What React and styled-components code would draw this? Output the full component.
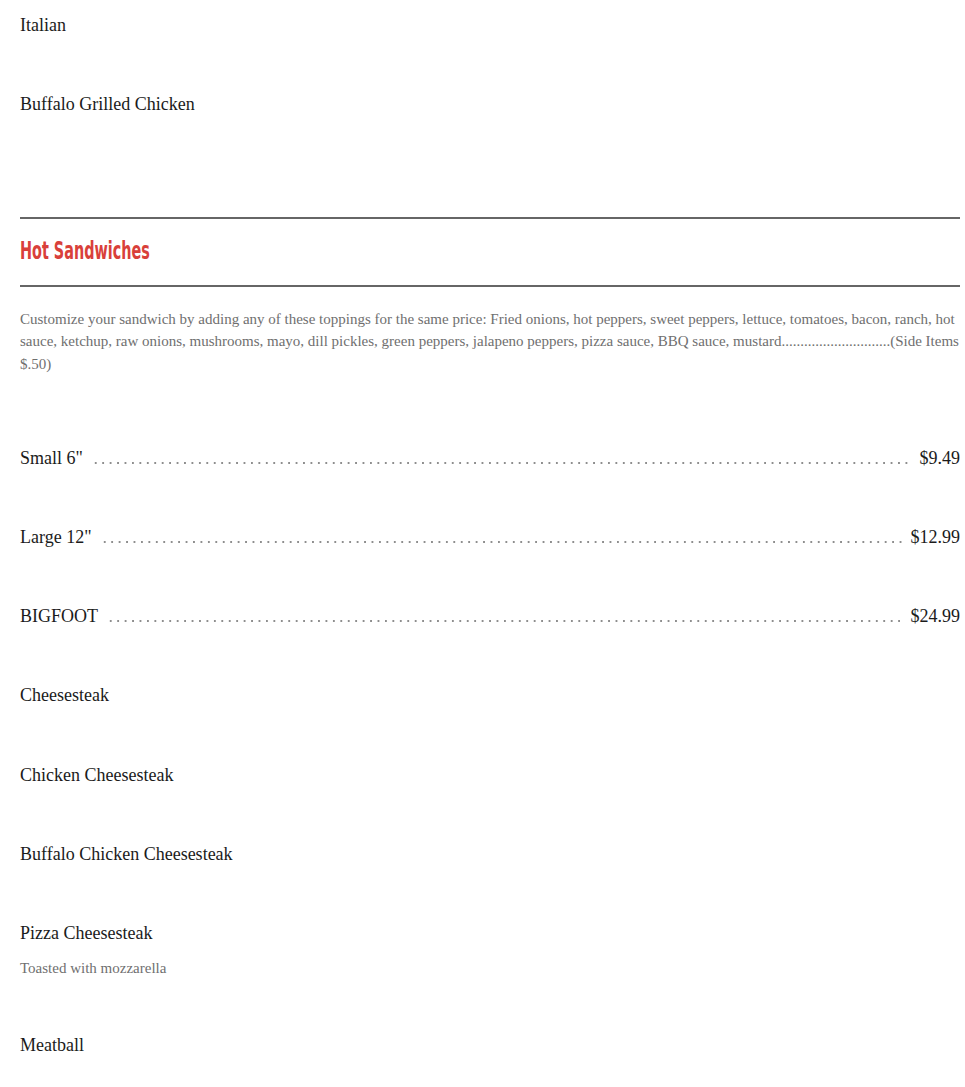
import styled, { createGlobalStyle } from "styled-components";

const GlobalStyle = createGlobalStyle`
  body {
    margin: 0;
    background: #fff;
    font-family: "Liberation Serif", "Times New Roman", serif;
    color: #1b1b1b;
  }
`;

const beforeItems = [{ name: "Italian" }, { name: "Buffalo Grilled Chicken" }];

const hotItems = [
  { name: 'Small 6"', price: "$9.49" },
  { name: 'Large 12"', price: "$12.99" },
  { name: "BIGFOOT", price: "$24.99" },
  { name: "Cheesesteak" },
  { name: "Chicken Cheesesteak" },
  { name: "Buffalo Chicken Cheesesteak" },
  { name: "Pizza Cheesesteak", note: "Toasted with mozzarella" },
  { name: "Meatball" },
];

function MenuItem({ name, price, note }) {
  return (
    <Item>
      <ItemRow>
        <ItemName>{name}</ItemName>
        {price && (
          <>
            <Leader />
            <Price>{price}</Price>
          </>
        )}
      </ItemRow>
      {note && <Note>{note}</Note>}
    </Item>
  );
}

export default function App() {
  return (
    <>
      <GlobalStyle />
      <Page>
        <ItemList>
          {beforeItems.map((item) => (
            <MenuItem key={item.name} {...item} />
          ))}
        </ItemList>
        <Section>
          <SectionHeader>
            <Title>Hot Sandwiches</Title>
          </SectionHeader>
          <Description>
            Customize your sandwich by adding any of these toppings for the same
            price: Fried onions, hot peppers, sweet peppers, lettuce, tomatoes,
            bacon, ranch, hot sauce, ketchup, raw onions, mushrooms, mayo, dill
            pickles, green peppers, jalapeno peppers, pizza sauce, BBQ sauce,
            mustard.............................(Side Items $.50)
          </Description>
          <ItemList>
            {hotItems.map((item) => (
              <MenuItem key={item.name} {...item} />
            ))}
          </ItemList>
        </Section>
      </Page>
    </>
  );
}

const Page = styled.div`
  padding: 12px 5px 0 20px;
`;

const ItemList = styled.div`
  display: flex;
  flex-direction: column;
`;

const Item = styled.div`
  margin-bottom: 52.3px;
`;

const ItemRow = styled.div`
  display: flex;
  align-items: baseline;
  font-size: 18px;
  line-height: 27px;
`;

const ItemName = styled.span`
  white-space: nowrap;
`;

const Leader = styled.span`
  flex: 1;
  height: 2px;
  margin: 0 8px 0 9px;
  background-image: radial-gradient(circle, #8e8e8e 0.75px, transparent 1.15px);
  background-size: 7.45px 2px;
  background-repeat: repeat-x;
`;

const Price = styled.span`
  white-space: nowrap;
`;

const Note = styled.div`
  margin-top: 10px;
  font-size: 15px;
  line-height: 22.5px;
  color: #6f6f6f;
`;

const Section = styled.section`
  margin-top: 46px;
`;

const SectionHeader = styled.div`
  border-top: 2px solid #666;
  border-bottom: 2px solid #666;
  padding: 19px 0 21px;
`;

const Title = styled.h2`
  display: inline-block;
  margin: 0;
  font-family: "DejaVu Sans", sans-serif;
  font-stretch: condensed;
  font-size: 25px;
  line-height: 26px;
  font-weight: 600;
  color: #d9403a;
  transform: scaleX(0.64);
  transform-origin: left center;
`;

const Description = styled.p`
  margin: 21px 0 69.5px;
  font-size: 15px;
  line-height: 22.5px;
  color: #6f6f6f;
`;
